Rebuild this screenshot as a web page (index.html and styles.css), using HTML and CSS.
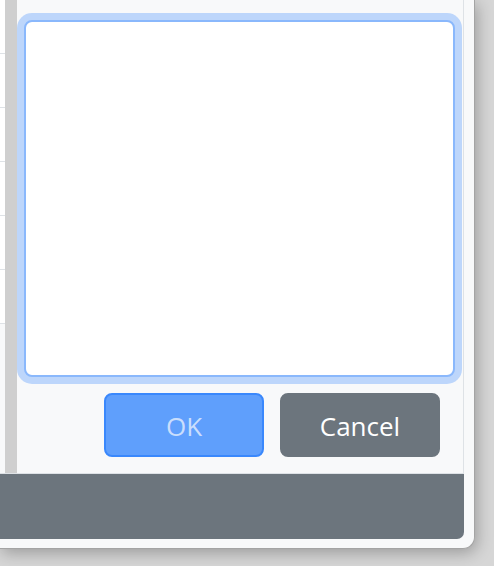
FILE: index.html
```html
<!DOCTYPE html>
<html lang="en">
<head>
<meta charset="utf-8">
<title>Dialog</title>
<link rel="stylesheet" href="styles.css">
</head>
<body>
<div class="frame">
  <div class="main">
    <div class="table-strip">
      <div class="strip-row"></div>
      <div class="strip-row"></div>
      <div class="strip-row"></div>
      <div class="strip-row"></div>
      <div class="strip-row"></div>
      <div class="strip-row"></div>
    </div>
    <div class="splitter"></div>
    <div class="panel">
      <textarea class="editor" aria-label="Text"></textarea>
      <div class="actions">
        <button class="btn btn-ok" disabled>OK</button>
        <button class="btn btn-cancel">Cancel</button>
      </div>
    </div>
  </div>
  <div class="footer-bar"></div>
</div>
</body>
</html>
```

FILE: styles.css
```css
html, body {
  margin: 0;
  padding: 0;
}

body {
  background: #d6d6d6;
  font-family: "Open Sans", "Noto Sans", "Liberation Sans", sans-serif;
  width: 494px;
  height: 566px;
  overflow: hidden;
}

.frame {
  box-sizing: border-box;
  width: 475px;
  height: 549px;
  background: #f8f9fa;
  border-right: 1px solid #a4a4a4;
  border-bottom: 1px solid #a4a4a4;
  border-bottom-right-radius: 12px;
  box-shadow: 2px 4px 16px rgba(0, 0, 0, 0.28);
  display: flex;
  flex-direction: column;
}

.main {
  box-sizing: border-box;
  width: 464px;
  height: 474px;
  border-bottom: 1px solid #dee2e6;
  display: flex;
}

.table-strip {
  width: 5px;
  flex: none;
  display: flex;
  flex-direction: column;
}

.strip-row {
  box-sizing: border-box;
  height: 54px;
  background: #ffffff;
  border-bottom: 1px solid #dee2e6;
}

.splitter {
  width: 12px;
  flex: none;
  background: #cfcfcf;
}

.panel {
  box-sizing: border-box;
  width: 447px;
  flex: none;
  padding: 20px 8px 16px 7px;
  border-right: 1px solid #dee2e6;
  display: flex;
  flex-direction: column;
}

.editor {
  display: block;
  box-sizing: border-box;
  width: 431px;
  height: 357px;
  margin: 0;
  padding: 8px;
  resize: none;
  outline: none;
  background: #ffffff;
  border: 2px solid #8ab8fc;
  border-radius: 8px;
  box-shadow: 0 0 0 7px #bdd6fb;
  font: inherit;
}

.actions {
  margin-top: 16px;
  padding-right: 15px;
  display: flex;
  justify-content: flex-end;
  gap: 16px;
}

.btn {
  box-sizing: border-box;
  width: 160px;
  height: 64px;
  border-radius: 8px;
  font-family: "Open Sans", "Noto Sans", "Liberation Sans", sans-serif;
  font-size: 26px;
  display: flex;
  align-items: center;
  justify-content: center;
  padding: 1px 0 0;
  cursor: pointer;
}

.btn-ok {
  background: #5f9ffc;
  border: 2px solid #3a88fc;
  color: #cadefc;
}

.btn-cancel {
  background: #6c757d;
  border: 2px solid #6c757d;
  color: #ffffff;
}

.footer-bar {
  width: 464px;
  height: 65px;
  background: #6c757d;
  border-bottom-right-radius: 7px;
}
```
